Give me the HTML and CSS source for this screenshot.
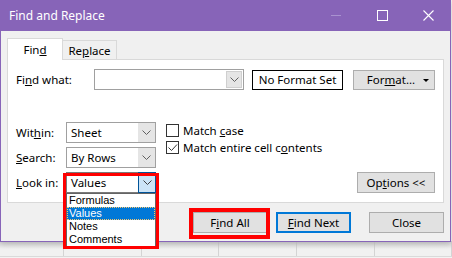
FILE: index.html
```html
<!DOCTYPE html>
<html>
    <head>
        <title>Find and Replace</title>
        <link rel="stylesheet" href="styles.css">
    </head>
    <body>
        <div class="window">
            <div class="titlebar">
                <span class="title">Find and Replace</span>
                <div class="controls">
                    <span class="ctl"><span class="min"></span></span>
                    <span class="ctl"><span class="max"></span></span>
                    <span class="ctl">
                        <svg width="11" height="11" viewBox="0 0 11 11"><path d="M0.5 0.5L10.5 10.5M10.5 0.5L0.5 10.5" stroke="#fff" stroke-width="1.1" fill="none"/></svg>
                    </span>
                </div>
            </div>
            <div class="body">
                <div class="tabs">
                    <div class="tab active">Fin<u>d</u></div>
                    <div class="tab">Re<u>p</u>lace</div>
                </div>
                <div class="panel">
                    <div class="find-row">
                        <label class="find-label">Fi<u>n</u>d what:</label>
                        <div class="combo edit">
                            <span class="field"></span>
                            <span class="arrow"><svg width="9" height="5" viewBox="0 0 9 5"><polyline points="0.5,0.5 4.5,4.5 8.5,0.5" stroke="#606060" fill="none"/></svg></span>
                        </div>
                        <div class="nofmt">No Format Set</div>
                        <div class="btn fmt"><span>For<u>m</u>at...</span><span class="caret"></span></div>
                    </div>
                    <div class="opts">
                        <label class="opt-label">Wit<u>h</u>in:</label>
                        <div class="combo">
                            <span class="field">Sheet</span>
                            <span class="arrow"><svg width="9" height="5" viewBox="0 0 9 5"><polyline points="0.5,0.5 4.5,4.5 8.5,0.5" stroke="#606060" fill="none"/></svg></span>
                        </div>
                        <div class="checks">
                            <div class="check"><span class="box"></span><span>Match <u>c</u>ase</span></div>
                            <div class="check"><span class="box"><svg width="11" height="11" viewBox="0 0 11 11"><polyline points="1.5,5.5 4.5,8.5 10,2.5" stroke="#333" stroke-width="1" fill="none"/></svg></span><span>Match entire cell c<u>o</u>ntents</span></div>
                        </div>
                        <label class="opt-label"><u>S</u>earch:</label>
                        <div class="combo">
                            <span class="field">By Rows</span>
                            <span class="arrow"><svg width="9" height="5" viewBox="0 0 9 5"><polyline points="0.5,0.5 4.5,4.5 8.5,0.5" stroke="#606060" fill="none"/></svg></span>
                        </div>
                        <label class="opt-label"><u>L</u>ook in:</label>
                        <div class="lookin">
                            <div class="combo open">
                                <span class="field">Values</span>
                                <span class="arrow"><svg width="9" height="5" viewBox="0 0 9 5"><polyline points="0.5,0.5 4.5,4.5 8.5,0.5" stroke="#404040" fill="none"/></svg></span>
                            </div>
                            <ul class="droplist">
                                <li>Formulas</li>
                                <li class="selected">Values</li>
                                <li>Notes</li>
                                <li>Comments</li>
                            </ul>
                            <div class="mark lookin-mark"></div>
                        </div>
                        <div class="btn options"><span>Op<u>t</u>ions &lt;&lt;</span></div>
                    </div>
                </div>
                <div class="actions">
                    <div class="btn act find-all"><span>F<u>i</u>nd All</span><div class="mark all-mark"></div></div>
                    <div class="btn act find-next"><span><u>F</u>ind Next</span></div>
                    <div class="btn act close">Close</div>
                </div>
            </div>
        </div>
        <div class="sheet">
            <span></span><span></span><span></span><span></span><span></span><span></span>
        </div>
    </body>
</html>
```

FILE: styles.css
```css
* {
    box-sizing: border-box;
}

body {
    margin: 0;
    width: 452px;
    height: 258px;
    overflow: hidden;
    background: #f3f3f3;
    font-family: "Noto Sans", "Segoe UI", sans-serif;
    font-size: 11.5px;
    color: #000;
}

.window {
    width: 451px;
    height: 242px;
    background: #f0f0f0;
    border: 1px solid #8764b8;
    border-top: 0;
    position: relative;
    z-index: 1;
    box-shadow: 0 2px 6px rgba(0, 0, 0, 0.18);
}

.titlebar {
    height: 31px;
    margin: 0 -1px;
    background: #8764b8;
    color: #fff;
    display: flex;
    align-items: center;
    justify-content: space-between;
    padding-left: 9px;
}

.title {
    font-size: 12px;
}

.controls {
    display: flex;
    height: 100%;
}

.ctl {
    width: 46px;
    height: 100%;
    display: flex;
    align-items: center;
    justify-content: center;
}

.min {
    width: 10px;
    height: 1px;
    background: #a992d0;
}

.max {
    width: 11px;
    height: 11px;
    border: 1px solid #fff;
}

.body {
    padding: 7px 6px 0 6px;
}

.tabs {
    display: flex;
    align-items: flex-end;
    height: 21px;
}

.tab {
    border: 1px solid #d9d9d9;
    border-bottom: 0;
    display: flex;
    align-items: center;
    justify-content: center;
}

.tab.active {
    width: 56px;
    height: 22px;
    margin-bottom: -1px;
    background: #fff;
    position: relative;
    z-index: 1;
    padding-bottom: 1px;
}

.tab + .tab {
    width: 55px;
    height: 19px;
    margin-left: -1px;
    background: #f0f0f0;
}

.panel {
    height: 144px;
    background: #fff;
    border: 1px solid #d9d9d9;
    padding: 9px 8px 0 8px;
}

.find-row {
    display: flex;
    align-items: center;
    height: 21px;
}

.find-label {
    width: 78px;
}

.combo {
    display: flex;
    height: 21px;
    border: 1px solid #a0a0a0;
    background: #fff;
}

.combo .field {
    flex: 1;
    padding-left: 4px;
    line-height: 19px;
}

.combo .arrow {
    width: 17px;
    background: #e5e5e5;
    display: flex;
    align-items: center;
    justify-content: center;
}

.combo.edit {
    width: 150px;
}

.combo.edit .arrow {
    border: 1px solid #cfcfcf;
    margin: 1px;
    width: 16px;
}

.nofmt {
    margin-left: 8px;
    width: 91px;
    height: 20px;
    border: 1px solid #000;
    display: flex;
    align-items: center;
    justify-content: center;
}

.btn {
    background: #e1e1e1;
    border: 1px solid #adadad;
    display: flex;
    align-items: center;
    justify-content: center;
}

.fmt {
    margin-left: 10px;
    width: 82px;
    height: 20px;
    position: relative;
    padding-right: 6px;
}

.caret {
    position: absolute;
    right: 5px;
    top: 8px;
    border-left: 3px solid transparent;
    border-right: 3px solid transparent;
    border-top: 3px solid #000;
}

.opts {
    margin-top: 32px;
    display: grid;
    grid-template-columns: 50px 90px 1fr;
    grid-template-rows: 21px 21px 21px;
    row-gap: 4px;
    align-items: center;
}

.checks {
    grid-column: 3;
    grid-row: 1 / 3;
    align-self: start;
    padding: 2px 0 0 10px;
    display: flex;
    flex-direction: column;
    gap: 4px;
}

.check {
    display: flex;
    align-items: center;
    height: 13px;
}

.box {
    width: 13px;
    height: 13px;
    border: 1px solid #333;
    background: #fff;
    margin-right: 4px;
    display: flex;
    align-items: center;
    justify-content: center;
}

.lookin {
    position: relative;
    height: 21px;
}

.combo.open {
    border-color: #7a7a7a;
}

.combo.open .arrow {
    background: #cce4f7;
    border: 1px solid #005499;
    margin: -1px -1px -1px 0;
    width: 18px;
}

.droplist {
    position: absolute;
    top: 21px;
    left: 0;
    width: 90px;
    margin: 0;
    padding: 0;
    list-style: none;
    background: #fff;
    border: 1px solid #646464;
    z-index: 3;
    font-family: "Liberation Sans", Arial, sans-serif;
    font-size: 11px;
}

.droplist li {
    height: 13px;
    line-height: 13px;
    padding-left: 2px;
    overflow: hidden;
}

.droplist .selected {
    background: #0078d7;
    color: #fff;
    outline: 1px dotted #f5c66f;
    outline-offset: -1px;
}

.mark {
    position: absolute;
    border: 3px solid #f00;
    z-index: 4;
}

.lookin-mark {
    left: -3px;
    right: -3px;
    top: 1px;
    height: 76px;
}

.options {
    grid-column: 3;
    grid-row: 3;
    justify-self: end;
    width: 78px;
    height: 21px;
}

.actions {
    margin-top: 9px;
    display: flex;
    justify-content: flex-end;
}

.act {
    width: 75px;
    height: 21px;
}

.find-all {
    width: 74px;
    position: relative;
}

.all-mark {
    border-width: 4px;
    left: -5px;
    right: -4px;
    top: -5px;
    bottom: -7px;
}

.find-next {
    margin-left: 9px;
    border: 2px solid #0078d7;
}

.close {
    margin-left: 18px;
}

.sheet {
    height: 16px;
    display: flex;
    background: linear-gradient(#d6d6d6, #f1f1f1 8px);
    border-bottom: 1px solid #dadada;
    margin-top: -1px;
}

.sheet span {
    width: 83px;
    border-right: 1px solid #d4d4d4;
}

.sheet span:first-child {
    width: 69px;
}
```
